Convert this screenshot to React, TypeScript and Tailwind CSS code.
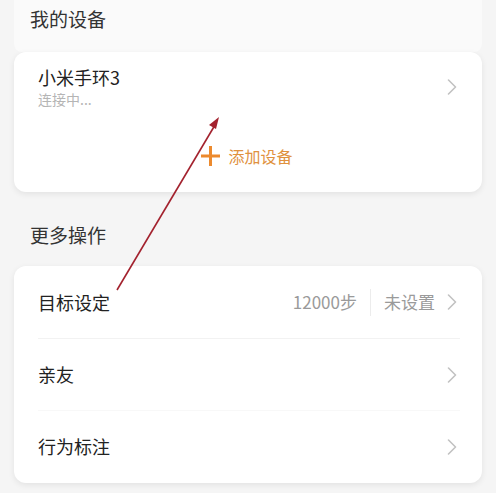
const font = { fontFamily: '"Noto Sans CJK SC", "Noto Sans", sans-serif' };

function Chevron() {
  return (
    <svg width="10" height="16" viewBox="0 0 10 16" className="shrink-0">
      <path d="M1.5 1 L8.5 8 L1.5 15" fill="none" stroke="#c2c2c2" strokeWidth="1.6" strokeLinecap="round" strokeLinejoin="round" />
    </svg>
  );
}

export default function App() {
  return (
    <div className="relative w-[496px] h-[493px] bg-[#f5f5f5] overflow-hidden" style={font}>
      <div className="px-[14px]">
        {/* 我的设备 */}
        <div className="h-[52px] pl-4 pt-[5px] text-[19px] leading-[28px] text-[#333] bg-[#fafafa] rounded-b-lg">
          我的设备
        </div>
        <div className="h-[140px] bg-white rounded-xl shadow-[0_2px_6px_rgba(0,0,0,0.08)] flex flex-col">
          <div className="flex items-center pl-6 pr-[25px] pt-[12px]">
            <div className="flex-1">
              <div className="text-[18px] leading-[26px] text-[#222]">小米手环3</div>
              <div className="text-[14px] leading-[19px] text-[#b5b5b5]">连接中...</div>
            </div>
            <Chevron />
          </div>
          <div className="flex items-center justify-center gap-[8px] mt-[36px] pr-[2px]">
            <svg width="19" height="20" viewBox="0 0 19 20">
              <path d="M9.5 0 V20 M0 10 H19" stroke="#ec8a2e" strokeWidth="3" />
            </svg>
            <span className="text-[16px] leading-[22px] text-[#e0913e]">添加设备</span>
          </div>
        </div>

        {/* 更多操作 */}
        <div className="h-[74px] pl-4 pt-[30px] text-[19px] leading-[26px] text-[#333]">更多操作</div>
        <div className="bg-white rounded-xl shadow-[0_2px_6px_rgba(0,0,0,0.08)] pb-[1px]">
          <div className="h-[72px] flex items-center pl-6 pr-[25px]">
            <span className="flex-1 text-[18px] text-[#222]">目标设定</span>
            <span className="text-[17px] text-[#9a9a9a]">12000步</span>
            <span className="w-px h-[27px] bg-[#ececec] mx-[13px]" />
            <span className="text-[17px] text-[#9a9a9a] mr-[12px]">未设置</span>
            <Chevron />
          </div>
          <div className="h-px bg-[#f2f2f2] ml-6 mr-[22px]" />
          <div className="h-[71px] flex items-center pl-6 pr-[25px]">
            <span className="flex-1 text-[18px] text-[#222]">亲友</span>
            <Chevron />
          </div>
          <div className="h-px bg-[#f8f8f8] ml-6 mr-[22px]" />
          <div className="h-[71px] flex items-center pl-6 pr-[25px]">
            <span className="flex-1 text-[18px] text-[#222]">行为标注</span>
            <Chevron />
          </div>
        </div>
      </div>

      {/* annotation arrow */}
      <svg className="absolute left-0 top-0 pointer-events-none" width="496" height="493">
        <line x1="117" y1="290" x2="215" y2="125" stroke="#a3222e" strokeWidth="1.6" />
        <polygon points="219,117 209,125 216,129" fill="#a3222e" />
      </svg>
    </div>
  );
}
